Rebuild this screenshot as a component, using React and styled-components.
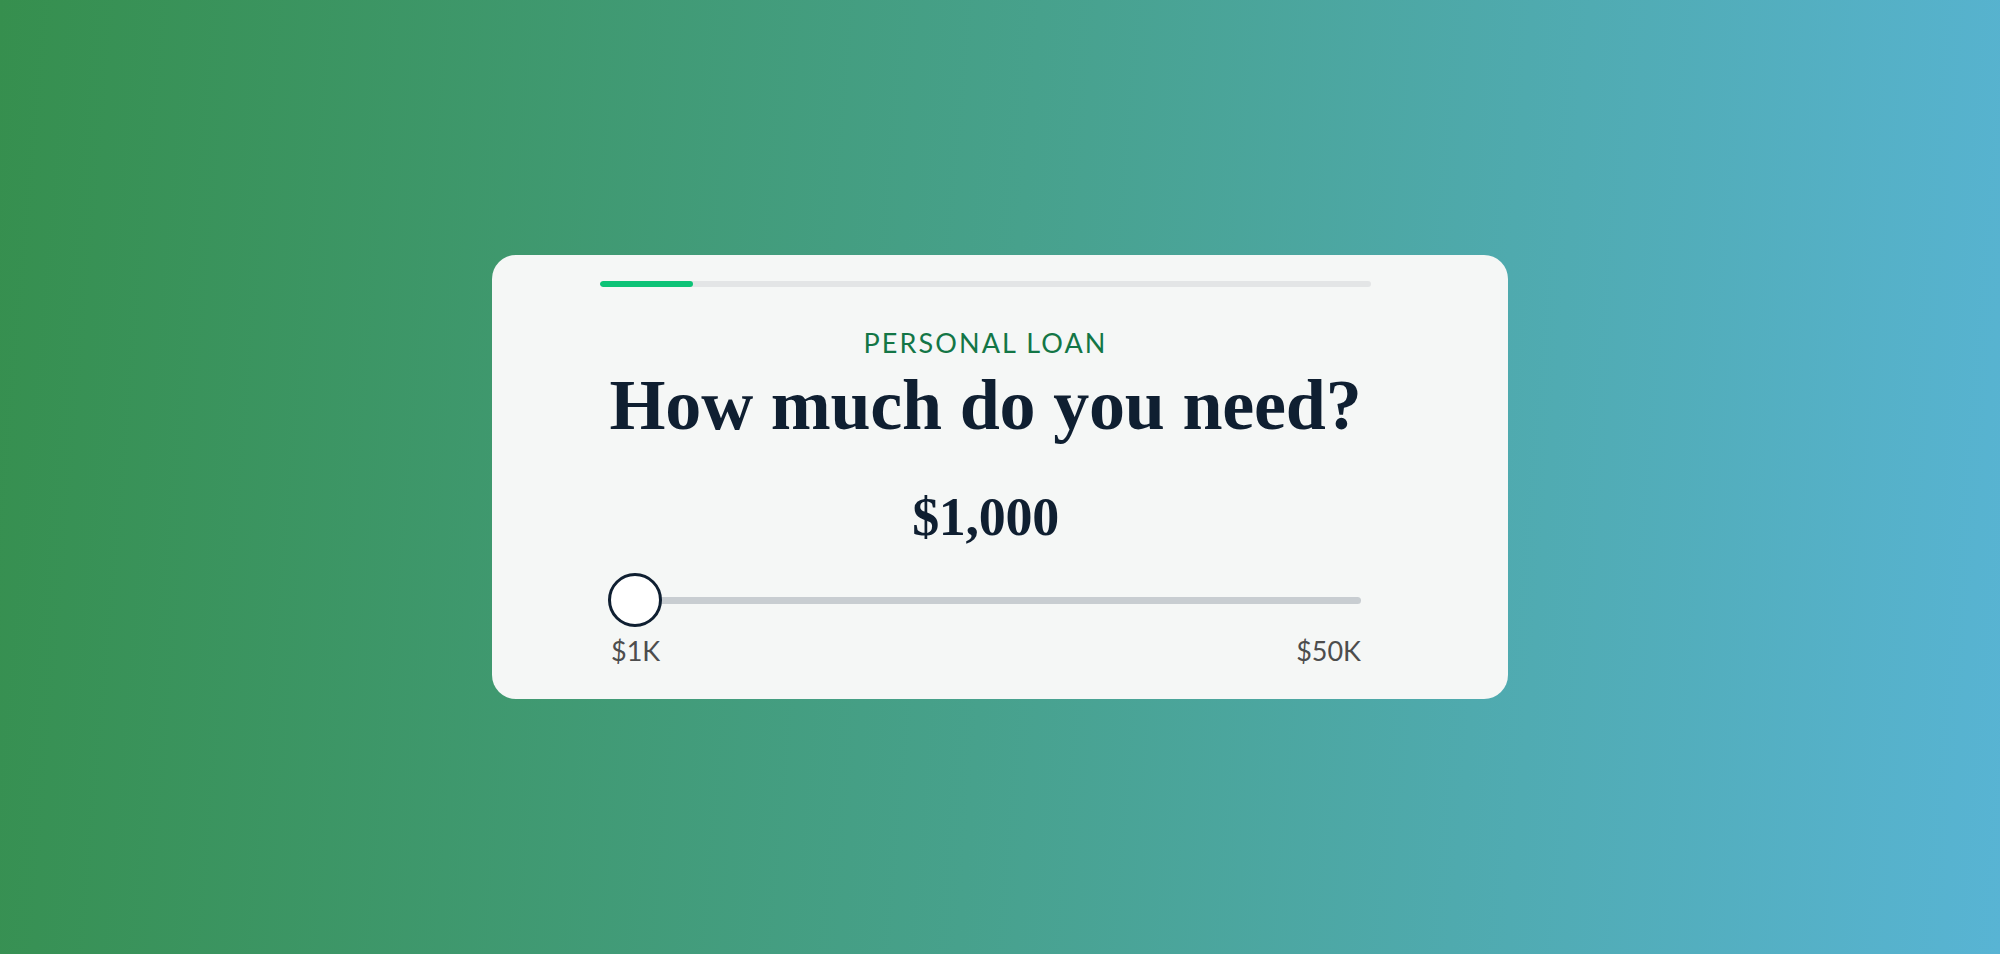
import React from "react";
import styled, { createGlobalStyle } from "styled-components";

const GlobalStyle = createGlobalStyle`
  html, body {
    margin: 0;
    padding: 0;
  }
  body {
    font-family: Lato, "Noto Sans", sans-serif;
  }
`;

const MIN = 1000;
const MAX = 50000;

function formatAmount(value){
  return "$" + value.toLocaleString("en-US");
}

class App extends React.Component {
  state = { amount: 1000, step: 3, steps: 25 };

  render(){
    const { amount, step, steps } = this.state;
    const pct = ((amount - MIN) / (MAX - MIN)) * 100;
    return (
      <Page>
        <GlobalStyle />
        <Card>
          <Progress>
            <ProgressFill style={{ width: `${(step / steps) * 100}%` }} />
          </Progress>
          <Eyebrow>Personal Loan</Eyebrow>
          <Title>How much do you need?</Title>
          <Amount>{formatAmount(amount)}</Amount>
          <Slider>
            <Track>
              <Thumb style={{ left: `${pct}%` }} />
            </Track>
            <Labels>
              <span>$1K</span>
              <span>$50K</span>
            </Labels>
          </Slider>
        </Card>
      </Page>
    );
  }
}

const Page = styled.div`
  width: 100vw;
  height: 100vh;
  display: flex;
  align-items: center;
  justify-content: center;
  background: linear-gradient(95deg, #368f4e 0%, #47a18c 50%, #58b4d4 100%);
`;

const Card = styled.div`
  box-sizing: border-box;
  width: 1016px;
  height: 444px;
  padding: 26px 137px 31px 108px;
  background: #f5f7f6;
  border-radius: 24px;
  display: flex;
  flex-direction: column;
  align-items: stretch;
`;

const Progress = styled.div`
  height: 6px;
  border-radius: 3px;
  background: #e3e5e6;
  overflow: hidden;
`;

const ProgressFill = styled.div`
  height: 100%;
  border-radius: 3px;
  background: #0dc377;
`;

const Eyebrow = styled.div`
  margin-top: 40px;
  font-family: Lato, sans-serif;
  font-size: 27px;
  line-height: 1.2;
  letter-spacing: 2.1px;
  text-transform: uppercase;
  text-align: center;
  color: #137646;
`;

const Title = styled.h1`
  margin: 8px 0 0;
  font-family: "Liberation Serif", "Times New Roman", serif;
  font-weight: 700;
  font-size: 72px;
  line-height: 1.08;
  letter-spacing: -0.2px;
  text-align: center;
  color: #0f1f31;
`;

const Amount = styled.div`
  margin-top: 43px;
  font-family: "Liberation Serif", "Times New Roman", serif;
  font-weight: 700;
  font-size: 54px;
  line-height: 1.1;
  letter-spacing: -0.3px;
  text-align: center;
  color: #0f1f31;
`;

const Slider = styled.div`
  margin: 25px 10px 0 8px;
`;

const Track = styled.div`
  position: relative;
  height: 54px;
  &::before {
    content: "";
    position: absolute;
    left: 0;
    right: 0;
    top: 50%;
    height: 7px;
    margin-top: -3px;
    border-radius: 4px;
    background: #c8cdd1;
  }
`;

const Thumb = styled.div`
  position: absolute;
  top: 0;
  box-sizing: border-box;
  width: 54px;
  height: 54px;
  border-radius: 50%;
  border: 3.5px solid #0f1f31;
  background: #ffffff;
`;

const Labels = styled.div`
  margin-top: 8px;
  display: flex;
  justify-content: space-between;
  padding-left: 3px;
  font-family: Lato, sans-serif;
  font-size: 27px;
  line-height: 1.2;
  color: #4d4d4d;
`;

export default App;
